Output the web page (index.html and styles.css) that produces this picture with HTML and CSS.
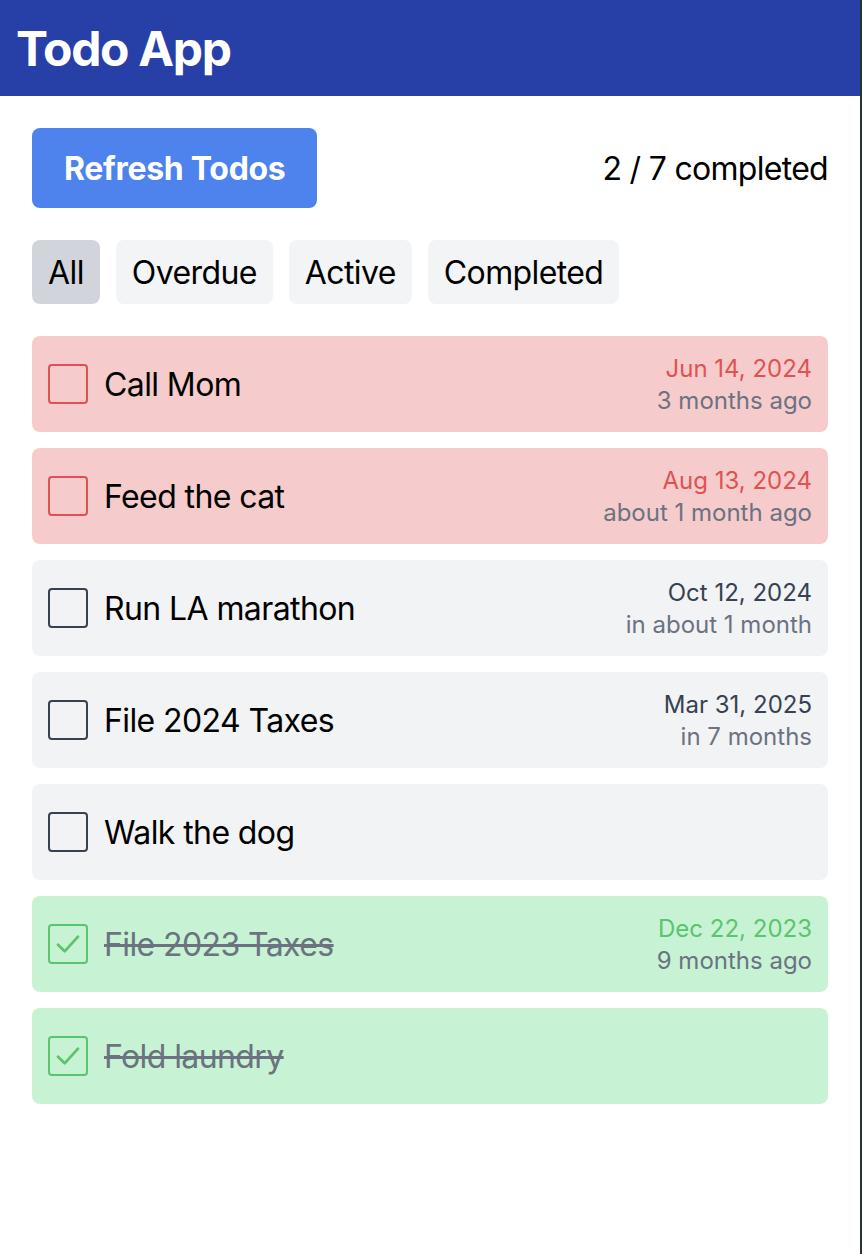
FILE: index.html
```html
<!DOCTYPE html>
<html lang="en">
<head>
<meta charset="utf-8">
<title>Todo App</title>
<link rel="stylesheet" href="styles.css">
</head>
<body>
<div class="page">
  <header class="topbar"><h1 class="title">Todo App</h1></header>
  <main class="main">
    <div class="toolbar">
      <button class="refresh">Refresh Todos</button>
      <div class="count">2 / 7 completed</div>
    </div>
    <div class="filters">
      <button class="filter selected">All</button>
      <button class="filter">Overdue</button>
      <button class="filter">Active</button>
      <button class="filter">Completed</button>
    </div>
    <ul class="list">
      <li class="item overdue">
        <span class="check"></span>
        <span class="label">Call Mom</span>
        <div class="due"><div class="date">Jun 14, 2024</div><div class="rel">3 months ago</div></div>
      </li>
      <li class="item overdue">
        <span class="check"></span>
        <span class="label">Feed the cat</span>
        <div class="due"><div class="date">Aug 13, 2024</div><div class="rel">about 1 month ago</div></div>
      </li>
      <li class="item">
        <span class="check"></span>
        <span class="label">Run LA marathon</span>
        <div class="due"><div class="date">Oct 12, 2024</div><div class="rel">in about 1 month</div></div>
      </li>
      <li class="item">
        <span class="check"></span>
        <span class="label">File 2024 Taxes</span>
        <div class="due"><div class="date">Mar 31, 2025</div><div class="rel">in 7 months</div></div>
      </li>
      <li class="item">
        <span class="check"></span>
        <span class="label">Walk the dog</span>
      </li>
      <li class="item done">
        <span class="check"><svg class="tick" viewBox="0 0 24 24"><path d="M4.5 12.5l5 5L19.5 6.5" fill="none" stroke="currentColor" stroke-width="2.1" stroke-linecap="round" stroke-linejoin="round"/></svg></span>
        <span class="label">File 2023 Taxes</span>
        <div class="due"><div class="date">Dec 22, 2023</div><div class="rel">9 months ago</div></div>
      </li>
      <li class="item done">
        <span class="check"><svg class="tick" viewBox="0 0 24 24"><path d="M4.5 12.5l5 5L19.5 6.5" fill="none" stroke="currentColor" stroke-width="2.1" stroke-linecap="round" stroke-linejoin="round"/></svg></span>
        <span class="label">Fold laundry</span>
      </li>
    </ul>
  </main>
</div>
</body>
</html>
```

FILE: styles.css
```css
* { box-sizing: border-box; }
html, body { margin: 0; padding: 0; background: #fff; }
body {
  font-family: Inter, "Noto Sans", "Liberation Sans", sans-serif;
  color: #000;
}
.page {
  width: 862px;
  min-height: 1254px;
  border-right: 2px solid #263238;
}
.topbar {
  background: #2640a8;
  padding: 17px 16px 15px;
}
.title {
  margin: 0;
  color: #fff;
  font-size: 48px;
  line-height: 64px;
  font-weight: 700;
  letter-spacing: -1.3px;
}
.main { padding: 32px; }
.toolbar {
  display: flex;
  justify-content: space-between;
  align-items: center;
}
.refresh {
  font-family: inherit;
  background: #4e82ed;
  color: #fff;
  border: 0;
  border-radius: 8px;
  font-size: 32px;
  line-height: 48px;
  font-weight: 700;
  letter-spacing: -0.3px;
  padding: 17px 32px 15px;
}
.count {
  font-size: 32px;
  line-height: 48px;
  letter-spacing: -0.7px;
  padding-top: 2px;
}
.filters {
  display: flex;
  gap: 16px;
  margin-top: 32px;
}
.filter {
  font-family: inherit;
  font-size: 32px;
  line-height: 48px;
  letter-spacing: -0.6px;
  padding: 9px 16px 7px;
  border: 0;
  border-radius: 8px;
  background: #f3f4f6;
  color: #000;
}
.filter.selected { background: #d1d5db; }
.list {
  list-style: none;
  margin: 32px 0 0;
  padding: 0;
  display: flex;
  flex-direction: column;
  gap: 16px;
}
.item {
  display: flex;
  align-items: center;
  gap: 16px;
  height: 96px;
  padding: 16px;
  border-radius: 8px;
  background: #f2f3f5;
}
.check {
  width: 40px;
  height: 40px;
  flex: none;
  border: 2px solid #374151;
  border-radius: 4px;
  display: flex;
  align-items: center;
  justify-content: center;
}
.tick { width: 32px; height: 32px; }
.label {
  flex: 1;
  font-size: 32px;
  line-height: 48px;
  letter-spacing: -0.6px;
  padding-top: 1px;
}
.due { text-align: right; font-size: 24px; line-height: 32px; padding-top: 2px; }
.date { color: #374151; }
.rel { color: #6b7280; }
.overdue { background: #f5cccb; }
.overdue .check { border-color: #e05252; }
.overdue .date { color: #e05252; }
.done { background: #c7f3d4; }
.done .check { border-color: #5cc46e; color: #5cc46e; }
.done .date { color: #5cc46e; }
.done .label { color: #6b7280; text-decoration: line-through; text-decoration-thickness: 3px; }
```
